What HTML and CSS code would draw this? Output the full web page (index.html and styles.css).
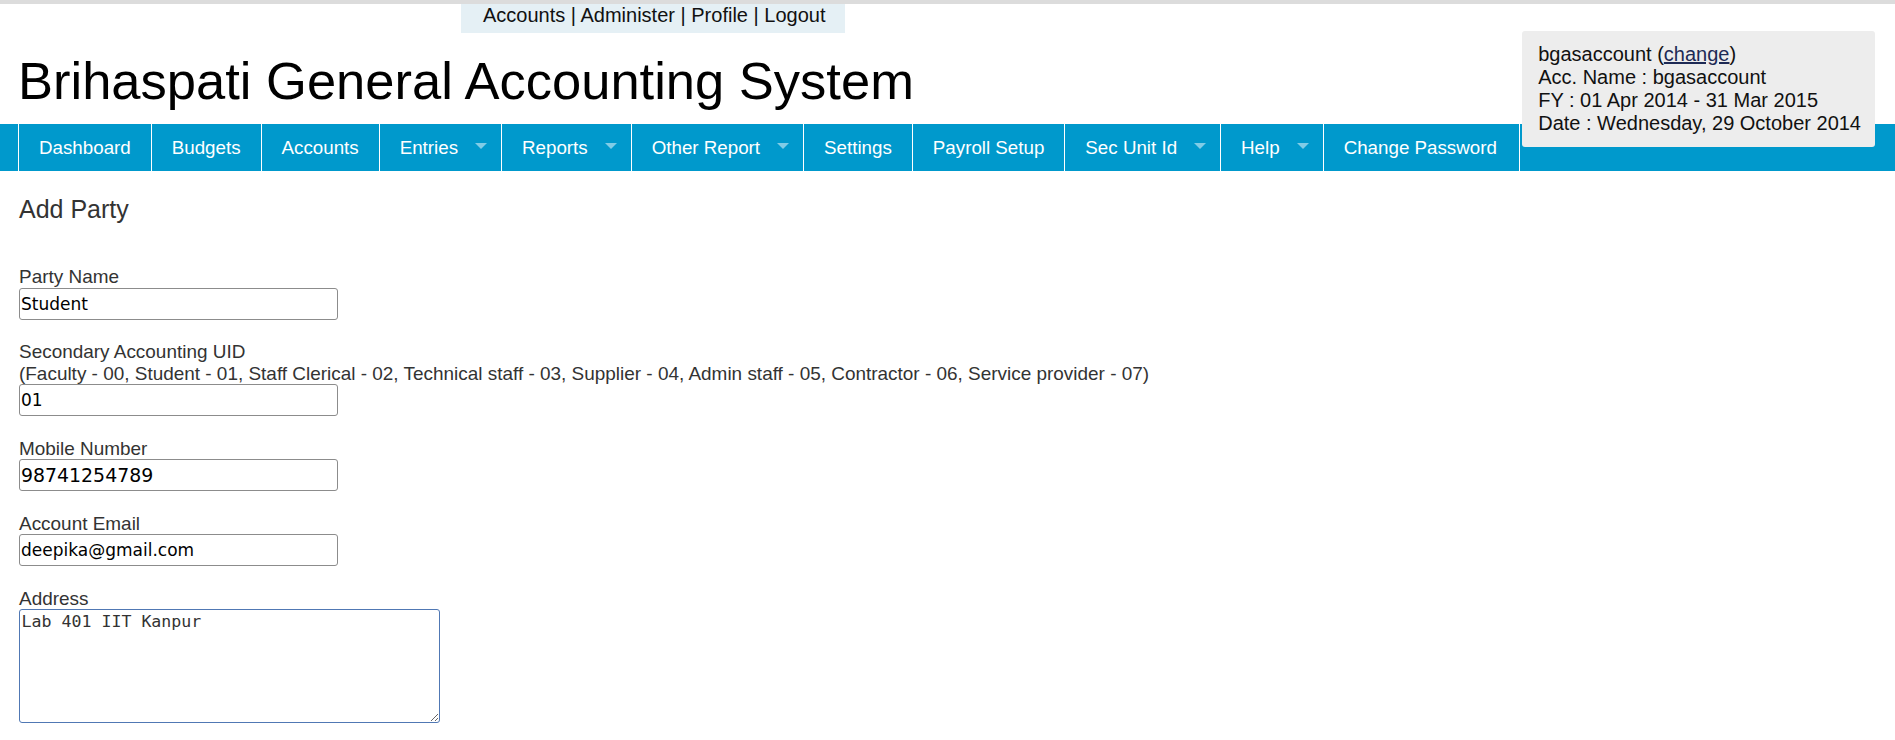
FILE: index.html
```html
<!DOCTYPE html>
<html lang="en">
<head>
<meta charset="utf-8">
<title>Brihaspati General Accounting System</title>
<link rel="stylesheet" href="styles.css">
</head>
<body>
<div class="topbar"></div>
<header class="header">
  <div class="toplinks"><a href="#">Accounts</a> | <a href="#">Administer</a> | <a href="#">Profile</a> | <a href="#">Logout</a></div>
  <h1 class="site-title">Brihaspati General Accounting System</h1>
  <div class="account-info">
    <div>bgasaccount (<a href="#" class="change-link">change</a>)</div>
    <div>Acc. Name : bgasaccount</div>
    <div>FY : 01 Apr 2014 - 31 Mar 2015</div>
    <div>Date : Wednesday, 29 October 2014</div>
  </div>
</header>
<nav class="mainnav">
  <ul class="menu">
    <li><a href="#">Dashboard</a></li>
    <li><a href="#">Budgets</a></li>
    <li><a href="#">Accounts</a></li>
    <li class="has-sub"><a href="#">Entries<span class="caret"></span></a></li>
    <li class="has-sub"><a href="#">Reports<span class="caret"></span></a></li>
    <li class="has-sub"><a href="#">Other Report<span class="caret"></span></a></li>
    <li><a href="#">Settings</a></li>
    <li><a href="#">Payroll Setup</a></li>
    <li class="has-sub"><a href="#">Sec Unit Id<span class="caret"></span></a></li>
    <li class="has-sub"><a href="#">Help<span class="caret"></span></a></li>
    <li class="last"><a href="#">Change Password</a></li>
  </ul>
</nav>
<main class="content">
  <h2 class="page-title">Add Party</h2>
  <form class="party-form">
    <div class="field">
      <label class="label" for="pname">Party Name</label>
      <input class="input" id="pname" type="text" value="Student">
    </div>
    <div class="field">
      <label class="label" for="uid">Secondary Accounting UID<span class="hint">(Faculty - 00, Student - 01, Staff Clerical - 02, Technical staff - 03, Supplier - 04, Admin staff - 05, Contractor - 06, Service provider - 07)</span></label>
      <input class="input" id="uid" type="text" value="01">
    </div>
    <div class="field">
      <label class="label" for="mobile">Mobile Number</label>
      <input class="input input-large" id="mobile" type="text" value="98741254789">
    </div>
    <div class="field">
      <label class="label" for="email">Account Email</label>
      <input class="input" id="email" type="text" value="deepika@gmail.com">
    </div>
    <div class="field last-field">
      <label class="label" for="addr">Address</label>
      <textarea class="textarea" id="addr">Lab 401 IIT Kanpur</textarea>
    </div>
  </form>
</main>
</body>
</html>
```

FILE: styles.css
```css
html, body {
  margin: 0;
  padding: 0;
  background: #ffffff;
}

body {
  font-family: "Liberation Sans", Arial, sans-serif;
  color: #000;
}

.topbar {
  height: 4px;
  background: #dcdcdc;
}

.header {
  position: relative;
}

.toplinks {
  width: fit-content;
  margin-left: 461px;
  padding: 0 20px 6px 22px;
  background: #e5f0f5;
  font-size: 20px;
  line-height: 23px;
  color: #111;
}

.toplinks a {
  color: #111;
  text-decoration: none;
}

.site-title {
  margin: 18px 0 13px 0;
  padding-left: 18px;
  font-size: 52.5px;
  line-height: 60px;
  font-weight: normal;
  color: #000;
}

.account-info {
  position: absolute;
  top: 27px;
  right: 20px;
  z-index: 2;
  padding: 12px 14px 12px 16px;
  background: #ededed;
  border-radius: 3px;
  font-size: 20px;
  line-height: 23px;
  color: #111;
  white-space: nowrap;
}

.change-link {
  color: #1e2a55;
  text-decoration: underline;
}

.mainnav {
  height: 47px;
  background: #0099cc;
}

.menu {
  display: flex;
  margin: 0;
  padding: 0 0 0 18px;
  list-style: none;
  height: 47px;
}

.menu li {
  border-left: 1px solid #ffffff;
}

.menu li.last {
  border-right: 1px solid #ffffff;
}

.menu a {
  display: flex;
  align-items: flex-start;
  box-sizing: border-box;
  height: 47px;
  padding: 13px 20px 0 20px;
  font-size: 18.75px;
  line-height: 22px;
  color: #ffffff;
  text-decoration: none;
  white-space: nowrap;
}

.menu li.has-sub a {
  padding-right: 14px;
}

.menu li.last a {
  padding-right: 22px;
}

.caret {
  width: 0;
  height: 0;
  margin-left: 17px;
  margin-top: 6px;
  border-left: 6.5px solid transparent;
  border-right: 6.5px solid transparent;
  border-top: 6px solid #80cce6;
}

.content {
  padding-left: 19px;
}

.page-title {
  margin: 25px 0 43px 0;
  font-size: 25px;
  line-height: 27px;
  font-weight: normal;
  color: #333;
}

.party-form {
  margin: 0;
}

.field {
  margin-bottom: 21.5px;
}

.field.last-field {
  margin-bottom: 0;
}

.label {
  display: block;
  font-size: 18.95px;
  line-height: 21.5px;
  color: #333;
}

.hint {
  display: block;
}

.input {
  display: block;
  box-sizing: border-box;
  width: 319px;
  height: 32px;
  margin: 0;
  padding: 0 2px 0 1px;
  border: 1px solid #8c8c8c;
  border-radius: 3px;
  background: #fff;
  font-family: "DejaVu Sans", sans-serif;
  font-size: 17px;
  color: #000;
  outline: none;
}

.input-large {
  font-size: 18.9px;
}

.textarea {
  display: block;
  box-sizing: border-box;
  width: 421px;
  height: 114px;
  margin: 0;
  padding: 2px 2px 2px 1.5px;
  border: 1px solid #5078b4;
  border-radius: 3px;
  background: #fff;
  font-family: "DejaVu Sans Mono", monospace;
  font-size: 16.6px;
  color: #333;
  outline: none;
}
```
